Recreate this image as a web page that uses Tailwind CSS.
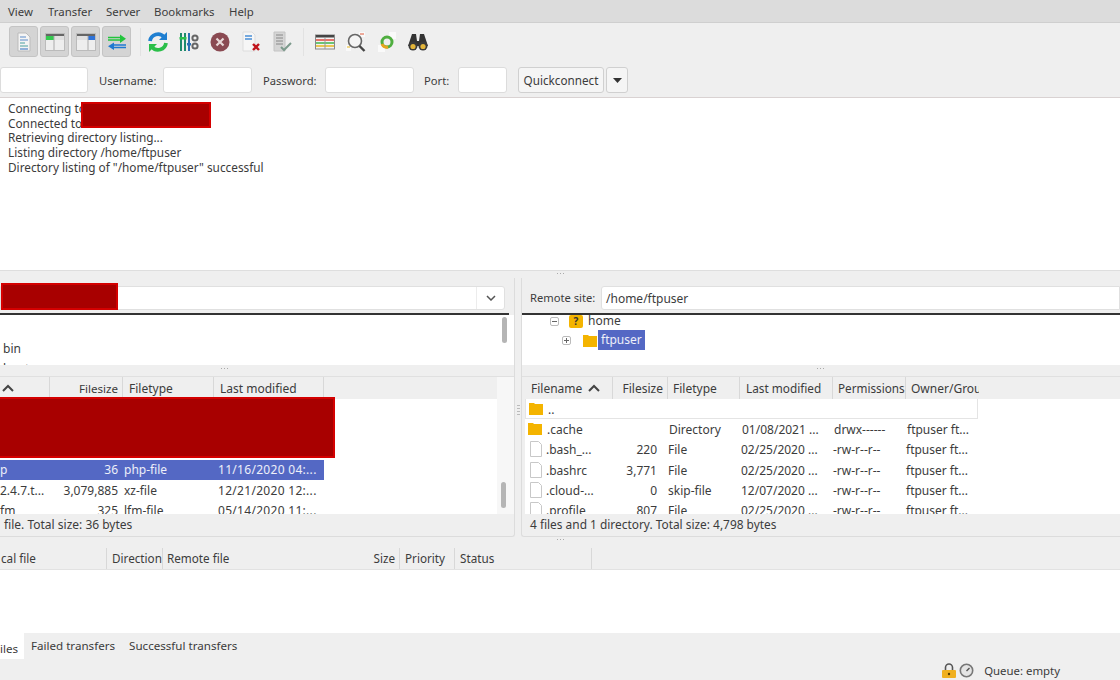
<!DOCTYPE html>
<html lang="en">
<head>
  <meta charset="UTF-8" />
  <title>FileZilla</title>
  <script src="https://cdn.jsdelivr.net/npm/@tailwindcss/browser@4"></script>
</head>
<body class="w-[1120px] h-[680px] overflow-hidden bg-[#efefef] text-[#3c3c3c] text-[12px] leading-[15px] font-['Noto_Sans',sans-serif]">
  <!-- menu -->
  <div class="h-[23px] bg-[#dcdcdc] border-b border-[#cfcfcf] flex items-center pl-[8px] text-[11.4px]">
    <span class="w-[40px]">View</span><span class="w-[58px]">Transfer</span><span class="w-[48px]">Server</span><span class="w-[75px]">Bookmarks</span><span>Help</span>
  </div>

  <!-- toolbar -->
  <div class="h-[37px] flex items-center pl-[9px]">
    <div class="flex gap-[2px]">
      <div class="w-[29px] h-[31px] bg-[#d4d4d4] border border-[#c4c4c4] rounded-[3px] flex items-center justify-center">
        <svg width="16" height="20" viewBox="0 0 16 20"><path d="M2 1h8l4 4v14H2z" fill="#f4f4f4" stroke="#bbb"/><path d="M4 5h6M4 8h8" stroke="#5b8bc9"/><path d="M4 11h5M4 14h8" stroke="#4aa0a0"/><path d="M4 17h8" stroke="#2f6fc0"/></svg>
      </div>
      <div class="w-[29px] h-[31px] bg-[#d4d4d4] border border-[#c4c4c4] rounded-[3px] flex items-center justify-center">
        <svg width="20" height="18" viewBox="0 0 20 18"><rect x="0.5" y="0.5" width="19" height="17" fill="#eee" stroke="#bbb"/><rect x="1" y="1" width="18" height="2" fill="#666"/><rect x="1" y="3" width="8" height="4" fill="#34c94f"/><rect x="9" y="3" width="10" height="4" fill="#e0e0e0"/><path d="M9 3v14" stroke="#aaa"/></svg>
      </div>
      <div class="w-[29px] h-[31px] bg-[#d4d4d4] border border-[#c4c4c4] rounded-[3px] flex items-center justify-center">
        <svg width="20" height="18" viewBox="0 0 20 18"><rect x="0.5" y="0.5" width="19" height="17" fill="#eee" stroke="#bbb"/><rect x="1" y="1" width="18" height="2" fill="#666"/><rect x="1" y="3" width="11" height="4" fill="#e0e0e0"/><rect x="12" y="3" width="7" height="4" fill="#2f73d8"/><path d="M12 3v14" stroke="#aaa"/></svg>
      </div>
      <div class="w-[29px] h-[31px] bg-[#d4d4d4] border border-[#c4c4c4] rounded-[3px] flex items-center justify-center">
        <svg width="20" height="18" viewBox="0 0 20 18"><path d="M1 4.500h13M1 7h13" stroke="#22c43c" stroke-width="1.600"/><path d="M13 1.500l6 4.200-6 4.200z" fill="#22c43c"/><path d="M6 12h13M6 14.500h13" stroke="#1f78d1" stroke-width="1.600"/><path d="M7 9.500l-6 3.700 6 3.700z" fill="#1f78d1"/></svg>
      </div>
    </div>
    <div class="w-px h-[28px] bg-[#e2e2e2] ml-[9px]"></div>
    <div class="flex items-center ml-[6px] gap-[9px]">
      <svg class="w-[22px] h-[22px]" viewBox="0 0 22 22" fill="none"><path d="M3 10a8 8 0 0 1 14-4" stroke="#1f7fd1" stroke-width="3.800"/><path d="M20 1v8h-8z" fill="#1f7fd1"/><path d="M19 12a8 8 0 0 1-14 4" stroke="#2bbf4a" stroke-width="3.800"/><path d="M2 21v-8h8z" fill="#2bbf4a"/></svg>
      <svg class="w-[22px] h-[22px]" viewBox="0 0 22 22"><path d="M3 2v18M7 2v18" stroke="#1d8a6c" stroke-width="2"/><path d="M11 2v18" stroke="#2a6fb5" stroke-width="2"/><rect x="1.500" y="6" width="7" height="2.500" fill="#2bbf4a"/><rect x="9" y="12" width="4" height="2.500" fill="#2a6fb5"/><circle cx="17" cy="7" r="2.600" fill="none" stroke="#666" stroke-width="2"/><circle cx="17" cy="15" r="2.600" fill="none" stroke="#666" stroke-width="2"/></svg>
      <svg class="w-[22px] h-[22px]" viewBox="0 0 22 22"><circle cx="11" cy="11" r="9.500" fill="#8a4a52"/><path d="M7.500 7.500l7 7M14.500 7.500l-7 7" stroke="#e8d8d8" stroke-width="2.200"/></svg>
      <svg class="w-[22px] h-[22px]" viewBox="0 0 22 22"><path d="M3 1h9l3 3v16H3z" fill="#f6f6f6" stroke="#ddd"/><path d="M5 5h7M5 8h7" stroke="#4a8fd6" stroke-width="1.500"/><path d="M13 13l6 6M19 13l-6 6" stroke="#c0141c" stroke-width="2.400"/></svg>
      <svg class="w-[22px] h-[22px]" viewBox="0 0 22 22"><path d="M3 1h11v19H3z" fill="#d5d5d5" stroke="#c4c4c4"/><path d="M5 4h7M5 7h7M5 10h7M5 13h7" stroke="#888"/><path d="M10 16l3 3 7-7" fill="none" stroke="#7c9a8c" stroke-width="2"/></svg>
    </div>
    <div class="w-px h-[28px] bg-[#e2e2e2] ml-[10px]"></div>
    <div class="flex items-center ml-[10px] gap-[9px]">
      <svg class="w-[22px] h-[22px]" viewBox="0 0 22 22"><rect x="1.500" y="4" width="19" height="14" fill="#f3f3f3" stroke="#888"/><rect x="2" y="4" width="18" height="2.500" fill="#444"/><path d="M2 9h18" stroke="#e0483c" stroke-width="1.500"/><path d="M2 12h18" stroke="#3fb54e" stroke-width="1.500"/><path d="M2 15h18" stroke="#e8b61d" stroke-width="1.500"/><path d="M11 6v12" stroke="#999"/></svg>
      <svg class="w-[22px] h-[22px]" viewBox="0 0 22 22" fill="none"><path d="M14 1h6v5h-6z" fill="#f9f9f9"/><path d="M15 3h4" stroke="#e05a3c"/><path d="M1 14h5v6H1z" fill="#f9f9f9"/><path d="M2 16h3" stroke="#e8b61d"/><circle cx="10" cy="10" r="6.500" fill="#f4f4f4" stroke="#666" stroke-width="1.600"/><path d="M14.500 15l5 5" stroke="#444" stroke-width="2.400"/></svg>
      <svg class="w-[22px] h-[22px]" viewBox="0 0 22 22" fill="none"><path d="M13 1h7v7h-7zM2 14h7v7H2z" fill="#fafafa"/><circle cx="11" cy="11" r="5" stroke="#4fae3f" stroke-width="3"/><path d="M6 13a5 5 0 0 0 6 3" stroke="#e8a51d" stroke-width="3"/></svg>
      <svg class="w-[22px] h-[22px]" viewBox="0 0 22 22"><path d="M5 3h4l1 7h2l1-7h4l4 12H1z" fill="#333"/><circle cx="6" cy="15" r="4.500" fill="#3a3a3a"/><circle cx="16" cy="15" r="4.500" fill="#3a3a3a"/><circle cx="6" cy="15.500" r="2.600" fill="#e3b53a"/><circle cx="16" cy="15.500" r="2.600" fill="#e3b53a"/></svg>
    </div>
  </div>

  <!-- quickconnect -->
  <div class="h-[38px] flex items-center border-b border-[#d9d2d2] pt-[3px] text-[11.2px]">
    <div class="w-[88px] h-[26px] bg-white border border-[#dcdcdc] rounded-[3px]"></div>
    <span class="ml-[11px] w-[58px] whitespace-nowrap">Username:</span>
    <div class="ml-[6px] w-[89px] h-[26px] bg-white border border-[#dcdcdc] rounded-[3px]"></div>
    <span class="ml-[11px] w-[56px] whitespace-nowrap">Password:</span>
    <div class="ml-[6px] w-[89px] h-[26px] bg-white border border-[#dcdcdc] rounded-[3px]"></div>
    <span class="ml-[10px] w-[27px] whitespace-nowrap">Port:</span>
    <div class="ml-[7px] w-[49px] h-[26px] bg-white border border-[#dcdcdc] rounded-[3px]"></div>
    <div class="ml-[11px] w-[86px] h-[26px] bg-[#f5f5f5] border border-[#d0d0d0] rounded-[3px] flex items-center justify-center text-[11.7px]">Quickconnect</div>
    <div class="ml-[2px] w-[22px] h-[26px] bg-[#f5f5f5] border border-[#d0d0d0] rounded-[3px] flex items-center justify-center">
      <svg width="9" height="5" viewBox="0 0 9 5"><path d="M0 0h9L4.500 5z" fill="#333"/></svg>
    </div>
  </div>

  <!-- message log -->
  <div class="relative h-[172px] bg-white pl-[8px] pt-[3px] leading-[14.7px] text-[11.8px]">
    <div>Connecting to</div>
    <div>Connected to</div>
    <div>Retrieving directory listing...</div>
    <div>Listing directory /home/ftpuser</div>
    <div>Directory listing of "/home/ftpuser" successful</div>
    <div class="absolute left-[81px] top-[4px] w-[130px] h-[26px] bg-[#a80000] border-2 border-[#d40000]"></div>
  </div>

  <!-- sash -->
  <div class="h-[8px] border-t border-[#dedede] flex justify-center gap-[2px] pt-[2px]">
    <i class="w-px h-px bg-[#aaa]"></i><i class="w-px h-px bg-[#aaa]"></i><i class="w-px h-px bg-[#aaa]"></i>
  </div>

  <!-- local / remote panes -->
  <div class="flex h-[259px]">
    <!-- local -->
    <div class="relative w-[515px] bg-[#efefef] border-r border-b border-[#dcdcdc] rounded-br-[3px] flex flex-col">
      <div class="h-[37px] pt-[8px] pr-[4px] border-b-2 border-[#333] mr-[5px]">
        <div class="h-[24px] bg-white border border-[#e0e0e0] rounded-r-[3px] flex justify-end">
          <div class="w-[28px] border-l border-[#ececec] flex items-center justify-center">
            <svg width="10" height="6" viewBox="0 0 10 6" fill="none"><path d="M1 1l4 4 4-4" stroke="#555" stroke-width="1.500"/></svg>
          </div>
        </div>
      </div>
      <div class="h-[50px] bg-white overflow-hidden flex justify-between pr-[3px]">
        <div class="pl-[3px] pt-[24px] leading-[20px]"><div>bin</div><div>boot</div></div>
        <div class="w-[9px]"><div class="w-[5px] h-[26px] mt-[2px] bg-[#b5b5b5] rounded-full"></div></div>
      </div>
      <div class="h-[11px] flex justify-center gap-[2px] pt-[3px] pr-[65px]">
        <i class="w-px h-px bg-[#aaa]"></i><i class="w-px h-px bg-[#aaa]"></i><i class="w-px h-px bg-[#aaa]"></i>
      </div>
      <div class="flex-1 flex flex-col border-t border-[#e0e0e0]">
        <div class="flex h-[137px]">
          <div class="w-[498px] overflow-hidden">
            <div class="h-[22px] flex items-center">
              <div class="w-[50px] h-full border-r border-[#d8d8d8] flex items-center pl-[2px]"><svg width="12" height="8" viewBox="0 0 12 8" fill="none"><path d="M1 7l5-5 5 5" stroke="#444" stroke-width="2"/></svg></div>
              <div class="w-[73px] h-full border-r border-[#d8d8d8] flex items-center justify-end pr-[4px] text-[11.6px]">Filesize</div>
              <div class="w-[91px] h-full border-r border-[#d8d8d8] flex items-center pl-[6px]">Filetype</div>
              <div class="w-[110px] h-full border-r border-[#d8d8d8] flex items-center pl-[6px]">Last modified</div>
            </div>
            <div class="h-[61px] bg-white"></div>
            <div class="bg-white h-[54px] overflow-hidden leading-[22px]">
              <div class="h-[20px] w-[324px] bg-[#5468c4] text-white/90 flex leading-[19px]"><span class="w-[50px]">p</span><span class="w-[68px] text-right">36</span><span class="ml-[6px] w-[94px]">php-file</span><span class="tracking-[0.3px]">11/16/2020 04:...</span></div>
              <div class="h-[20px] w-[324px] flex"><span class="w-[50px]">2.4.7.t...</span><span class="w-[68px] text-right">3,079,885</span><span class="ml-[6px] w-[94px]">xz-file</span><span class="tracking-[0.3px]">12/21/2020 12:...</span></div>
              <div class="h-[20px] w-[324px] flex"><span class="w-[50px]">fm</span><span class="w-[68px] text-right">325</span><span class="ml-[6px] w-[94px]">lfm-file</span><span class="tracking-[0.3px]">05/14/2020 11:...</span></div>
            </div>
          </div>
          <div class="w-[17px] pl-[4px] bg-[#f7f7f7]"><div class="w-[5px] h-[26px] mt-[105px] bg-[#b5b5b5] rounded-full"></div></div>
        </div>
        <div class="pl-[4px] pt-[3px]">file. Total size: 36 bytes</div>
      </div>
      <div class="absolute left-[1px] top-[5px] w-[117px] h-[27px] bg-[#a80000] border-2 border-[#d40000]"></div>
      <div class="absolute left-0 top-[119px] w-[335px] h-[61px] bg-[#a80000] border-r-2 border-y-2 border-[#d40000]"></div>
    </div>

    <!-- vertical sash -->
    <div class="w-[6px] flex flex-col items-center gap-[2px] pt-[127px]">
      <i class="w-[3px] h-px bg-[#bbb]"></i><i class="w-[3px] h-px bg-[#bbb]"></i><i class="w-[3px] h-px bg-[#bbb]"></i><i class="w-[3px] h-px bg-[#bbb]"></i>
    </div>

    <!-- remote -->
    <div class="flex-1 bg-[#efefef] border-l border-b border-[#dcdcdc] rounded-bl-[3px] flex flex-col">
      <div class="h-[37px] pt-[8px] pl-[8px] border-b-2 border-[#333] flex">
        <span class="w-[66px] leading-[24px] text-[11.2px] whitespace-nowrap">Remote site:</span>
        <div class="ml-[5px] flex-1 h-[24px] bg-white border border-[#e0e0e0] rounded-l-[3px] leading-[23px] pl-[4px]">/home/ftpuser</div>
      </div>
      <div class="h-[50px] bg-white overflow-hidden pl-[28px] leading-[20px]">
        <div class="flex items-center h-[12px]">
          <span class="w-[9px] h-[9px] border border-[#bbb] rounded-[2px] flex items-center justify-center"><i class="w-[5px] h-px bg-[#666]"></i></span>
          <span class="ml-[10px] w-[14px] h-[13px] bg-[#f4b400] rounded-[2px] text-[10px] leading-[13px] font-bold text-center text-[#333]">?</span>
          <span class="ml-[5px]">home</span>
        </div>
        <div class="flex items-center h-[20px] mt-[3px] pl-[12px]">
          <span class="relative w-[9px] h-[9px] border border-[#bbb] rounded-[2px] flex items-center justify-center"><i class="w-[5px] h-px bg-[#666]"></i><i class="absolute w-px h-[5px] bg-[#666]"></i></span>
          <svg class="ml-[12px]" width="14" height="13" viewBox="0 0 14 13"><path d="M0 1h5l1 1h8v11H0z" fill="#f4b400"/></svg>
          <span class="ml-[1px] h-[20px] px-[3px] bg-[#5468c4] text-white/90 leading-[20px]">ftpuser</span>
        </div>
      </div>
      <div class="h-[11px] flex justify-center gap-[2px] pt-[3px] pr-[1px]">
        <i class="w-px h-px bg-[#aaa]"></i><i class="w-px h-px bg-[#aaa]"></i><i class="w-px h-px bg-[#aaa]"></i>
      </div>
      <div class="flex-1 flex flex-col border-t border-[#e0e0e0]">
        <div class="h-[137px] pl-[3px] flex flex-col">
          <div class="h-[22px] flex items-center">
            <div class="w-[88px] h-full border-r border-[#d8d8d8] flex items-center pl-[6px] gap-[6px]">Filename <svg width="12" height="8" viewBox="0 0 12 8" fill="none"><path d="M1 7l5-5 5 5" stroke="#444" stroke-width="2"/></svg></div>
            <div class="w-[55px] h-full border-r border-[#d8d8d8] flex items-center justify-end pr-[4px]">Filesize</div>
            <div class="w-[72px] h-full border-r border-[#d8d8d8] flex items-center pl-[5px]">Filetype</div>
            <div class="w-[93px] h-full border-r border-[#d8d8d8] flex items-center pl-[6px]"><span class="text-[11.8px]">Last modified</span></div>
            <div class="w-[73px] h-full border-r border-[#d8d8d8] flex items-center pl-[5px]"><span class="text-[11.7px]">Permissions</span></div>
            <div class="w-[73px] h-full flex items-center pl-[5px] overflow-hidden whitespace-nowrap">Owner/Group</div>
          </div>
          <div class="flex-1 bg-white leading-[22px] overflow-hidden">
            <div class="flex h-[20.2px] w-[453px] border border-[#e4e4e4] border-t-0">
              <svg class="mt-[3px] ml-[3px]" width="14" height="13" viewBox="0 0 14 13"><path d="M0 1h5l1 1h8v11H0z" fill="#f4b400"/></svg>
              <span class="ml-[5px]">..</span>
            </div>
            <div class="flex h-[20.2px]">
              <svg class="mt-[3px] ml-[3px]" width="14" height="13" viewBox="0 0 14 13"><path d="M0 1h5l1 1h8v11H0z" fill="#f4b400"/></svg>
              <span class="ml-[5px] w-[47px]">.cache</span><span class="w-[64px] text-right"></span><span class="ml-[11px] w-[64px]">Directory</span><span class="ml-[9px] w-[92px]">01/08/2021 ...</span><span class="w-[73px]">drwx------</span><span>ftpuser ft...</span>
            </div>
            <div class="flex h-[20.2px]">
              <svg class="mt-[2px] ml-[5px]" width="12" height="16" viewBox="0 0 12 16"><path d="M.5.500h8l3 3v12H.500z" fill="#fff" stroke="#c8c8c8"/></svg>
              <span class="ml-[4px] w-[47px]">.bash_...</span><span class="w-[64px] text-right">220</span><span class="ml-[11px] w-[64px]">File</span><span class="ml-[9px] w-[92px]">02/25/2020 ...</span><span class="w-[73px]">-rw-r--r--</span><span>ftpuser ft...</span>
            </div>
            <div class="flex h-[20.2px]">
              <svg class="mt-[2px] ml-[5px]" width="12" height="16" viewBox="0 0 12 16"><path d="M.5.500h8l3 3v12H.500z" fill="#fff" stroke="#c8c8c8"/></svg>
              <span class="ml-[4px] w-[47px]">.bashrc</span><span class="w-[64px] text-right">3,771</span><span class="ml-[11px] w-[64px]">File</span><span class="ml-[9px] w-[92px]">02/25/2020 ...</span><span class="w-[73px]">-rw-r--r--</span><span>ftpuser ft...</span>
            </div>
            <div class="flex h-[20.2px]">
              <svg class="mt-[2px] ml-[5px]" width="12" height="16" viewBox="0 0 12 16"><path d="M.5.500h8l3 3v12H.500z" fill="#fff" stroke="#c8c8c8"/></svg>
              <span class="ml-[4px] w-[47px]">.cloud-...</span><span class="w-[64px] text-right">0</span><span class="ml-[11px] w-[64px]">skip-file</span><span class="ml-[9px] w-[92px]">12/07/2020 ...</span><span class="w-[73px]">-rw-r--r--</span><span>ftpuser ft...</span>
            </div>
            <div class="flex h-[20.2px]">
              <svg class="mt-[2px] ml-[5px]" width="12" height="16" viewBox="0 0 12 16"><path d="M.5.500h8l3 3v12H.500z" fill="#fff" stroke="#c8c8c8"/></svg>
              <span class="ml-[4px] w-[47px]">.profile</span><span class="w-[64px] text-right">807</span><span class="ml-[11px] w-[64px]">File</span><span class="ml-[9px] w-[92px]">02/25/2020 ...</span><span class="w-[73px]">-rw-r--r--</span><span>ftpuser ft...</span>
            </div>
          </div>
        </div>
        <div class="pl-[8px] pt-[3px] text-[11.9px]">4 files and 1 directory. Total size: 4,798 bytes</div>
      </div>
    </div>
  </div>

  <!-- sash -->
  <div class="h-[11px] flex justify-center gap-[2px] pt-[2px]">
    <i class="w-px h-px bg-[#aaa]"></i><i class="w-px h-px bg-[#aaa]"></i><i class="w-px h-px bg-[#aaa]"></i>
  </div>

  <!-- transfer queue -->
  <div class="h-[22px] flex items-center border-b border-[#e2e2e2] text-[11.7px]">
    <div class="w-[107px] h-full border-r border-[#d8d8d8] flex items-center pl-[1px]">cal file</div>
    <div class="w-[56px] h-full border-r border-[#d8d8d8] flex items-center pl-[5px]">Direction</div>
    <div class="w-[237px] h-full border-r border-[#d8d8d8] flex items-center justify-between pl-[4px] pr-[4px]"><span>Remote file</span><span>Size</span></div>
    <div class="w-[55px] h-full border-r border-[#d8d8d8] flex items-center pl-[5px]">Priority</div>
    <div class="w-[137px] h-full border-r border-[#d8d8d8] flex items-center pl-[5px]">Status</div>
  </div>
  <div class="h-[63px] bg-white"></div>
  <div class="h-[25px] flex items-start text-[11.6px]">
    <div class="w-[24px] h-[26px] bg-white pt-[8px] text-right pr-[6px]">iles</div>
    <span class="ml-[7px] mt-[5px]">Failed transfers</span>
    <span class="ml-[14px] mt-[5px]">Successful transfers</span>
  </div>

  <!-- status bar -->
  <div class="h-[22px] flex items-center justify-end pr-[60px] pt-[3px]">
    <svg width="14" height="15" viewBox="0 0 14 15" fill="none"><path d="M3.500 7V4.500a3.500 3.500 0 0 1 7 0V7" stroke="#555" stroke-width="1.600"/><rect x="0" y="7" width="14" height="8" rx="1" fill="#f0b020"/><circle cx="7" cy="11" r="1.200" fill="#5a4000"/></svg>
    <svg class="ml-[3px]" width="15" height="15" viewBox="0 0 15 15" fill="none"><circle cx="7.500" cy="7.500" r="6.200" fill="#e4e4e4" stroke="#777" stroke-width="1.600"/><path d="M7.500 8l3-3" stroke="#555" stroke-width="1.400"/></svg>
    <span class="ml-[10px] text-[11.4px]">Queue: empty</span>
  </div>
</body>
</html>
